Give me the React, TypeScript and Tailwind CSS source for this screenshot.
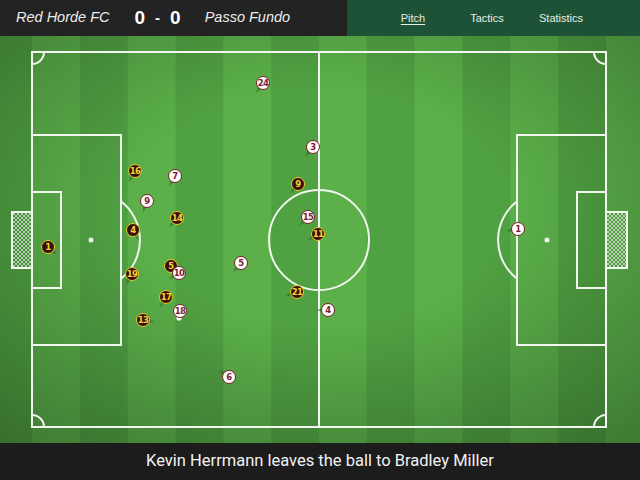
import React from "react";

type Player = { n: number; x: number; y: number; a: number };

// Match view: pitch coordinates are in pixels of the pitch area (top bar excluded)
const TOP = 36;

const HOME: Player[] = [
  { n: 1, x: 48, y: 247, a: 40 },
  { n: 16, x: 135, y: 171, a: 120 },
  { n: 4, x: 133, y: 230, a: 60 },
  { n: 14, x: 177, y: 218, a: 130 },
  { n: 19, x: 132, y: 274, a: 120 },
  { n: 5, x: 171, y: 266, a: 60 },
  { n: 17, x: 166, y: 297, a: 120 },
  { n: 13, x: 143, y: 320, a: 10 },
  { n: 9, x: 298, y: 184, a: 130 },
  { n: 11, x: 318, y: 234, a: 150 },
  { n: 21, x: 297, y: 292, a: 160 },
];

const AWAY: Player[] = [
  { n: 24, x: 263, y: 83, a: 125 },
  { n: 3, x: 313, y: 147, a: 130 },
  { n: 7, x: 175, y: 176, a: 120 },
  { n: 9, x: 147, y: 201, a: 110 },
  { n: 15, x: 308, y: 217, a: 135 },
  { n: 5, x: 241, y: 263, a: 130 },
  { n: 10, x: 179, y: 273, a: 150 },
  { n: 18, x: 180, y: 311, a: 100 },
  { n: 4, x: 328, y: 310, a: 180 },
  { n: 6, x: 229, y: 377, a: 215 },
  { n: 1, x: 518, y: 229, a: 170 },
];

const LINE = "#f1f6ee";

function shadowPoints(p: Player) {
  const r = (p.a * Math.PI) / 180;
  const cx = p.x;
  const cy = p.y - TOP;
  const tx = cx + 12 * Math.cos(r);
  const ty = cy + 12 * Math.sin(r);
  const px = -Math.sin(r) * 4;
  const py = Math.cos(r) * 4;
  return `${cx + px},${cy + py} ${tx},${ty} ${cx - px},${cy - py}`;
}

function PitchDrawing() {
  const stripeW = 574 / 12;
  const stripes = [];
  for (let k = -1; k <= 12; k++) {
    if (k % 2 !== 0) {
      stripes.push(
        <rect key={k} x={32 + stripeW * k} y={0} width={stripeW} height={407} fill="#50a142" />
      );
    }
  }
  const cy = 204;
  return (
    <svg width={640} height={407} className="absolute inset-0" viewBox="0 0 640 407">
      <defs>
        <radialGradient id="vignette" cx="50%" cy="42%" r="75%">
          <stop offset="0.38" stopColor="#000" stopOpacity="0" />
          <stop offset="1" stopColor="#000" stopOpacity="0.3" />
        </radialGradient>
        <pattern id="net" width="4" height="4" patternUnits="userSpaceOnUse">
          <path d="M0 0 L4 4 M4 0 L0 4" stroke="#ffffff" strokeWidth="0.7" opacity="0.85" />
        </pattern>
      </defs>
      <rect width={640} height={407} fill="#5bb04a" />
      {stripes}
      <rect width={640} height={407} fill="url(#vignette)" />

      <g fill="none" stroke={LINE} strokeWidth={2}>
        <rect x={32} y={16} width={574} height={375} />
        <line x1={319} y1={16} x2={319} y2={391} />
        <circle cx={319} cy={cy} r={50} />

        {/* left end */}
        <rect x={32} y={99} width={89} height={210} />
        <rect x={32} y={156} width={29} height={96} />
        <path d={`M121 ${cy - 38.7} A49 49 0 0 1 121 ${cy + 38.7}`} />
        <rect x={12} y={176} width={20} height={56} fill="url(#net)" />

        {/* right end */}
        <rect x={517} y={99} width={89} height={210} />
        <rect x={577} y={156} width={29} height={96} />
        <path d={`M517 ${cy - 38.7} A49 49 0 0 0 517 ${cy + 38.7}`} />
        <rect x={606} y={176} width={21} height={56} fill="url(#net)" />

        {/* corners */}
        <path d="M32 28 A12 12 0 0 0 44 16" />
        <path d="M594 16 A12 12 0 0 0 606 28" />
        <path d="M32 379 A12 12 0 0 1 44 391" />
        <path d="M594 391 A12 12 0 0 1 606 379" />
      </g>
      <circle cx={91} cy={cy} r={2.5} fill={LINE} />
      <circle cx={547} cy={cy} r={2.5} fill={LINE} />

      {[...HOME, ...AWAY].map((p, i) => (
        <polygon key={i} points={shadowPoints(p)} fill="#1f4a18" opacity={0.4} />
      ))}

      {/* ball */}
      <circle cx={179} cy={282} r={2.6} fill="#ffffff" stroke="#bbbbbb" strokeWidth={0.5} />
    </svg>
  );
}

function Marker({ p, home }: { p: Player; home: boolean }) {
  return (
    <div
      className={
        home
          ? "absolute flex h-[14px] w-[14px] items-center justify-center rounded-full border-[1.5px] border-[#e9cf1f] bg-[#3a0e13] text-[8.5px] font-bold leading-none tracking-[-0.6px] text-[#f3d62b] font-['DejaVu_Sans',sans-serif]"
          : "absolute flex h-[14px] w-[14px] items-center justify-center rounded-full border-[1.5px] border-[#7c1b2b] bg-white text-[8.5px] font-bold leading-none tracking-[-0.6px] text-[#7c1b2b] font-['DejaVu_Sans',sans-serif]"
      }
      style={{ left: p.x - 7, top: p.y - TOP - 7 }}
    >
      {p.n}
    </div>
  );
}

export default function App() {
  return (
    <div className="flex h-[480px] w-[640px] flex-col overflow-hidden font-['Liberation_Sans',Arial,sans-serif]">
      <header className="flex h-9 shrink-0">
        <div className="flex w-[347px] items-center bg-[#232323] pl-4 text-[#ececec]">
          <span className="text-[14.5px] italic">Red Horde FC</span>
          <div className="ml-[25px] flex items-center gap-[10px] font-bold text-white">
            <span className="text-[19px]">0</span>
            <span className="text-[15px]">-</span>
            <span className="text-[19px]">0</span>
          </div>
          <span className="ml-[24px] text-[14.5px] italic">Passo Fundo</span>
        </div>
        <nav className="flex flex-1 items-center bg-[#1d5236] pl-[29px] text-[11px] text-[#e6eee8]">
          <span className="flex w-[74px] justify-center underline underline-offset-2">Pitch</span>
          <span className="flex w-[74px] justify-center">Tactics</span>
          <span className="flex w-[74px] justify-center">Statistics</span>
        </nav>
      </header>

      <main className="relative flex-1">
        <PitchDrawing />
        {HOME.map((p) => (
          <Marker key={`h${p.n}`} p={p} home />
        ))}
        {AWAY.map((p) => (
          <Marker key={`a${p.n}`} p={p} home={false} />
        ))}
      </main>

      <footer className="flex h-[37px] shrink-0 items-center justify-center bg-[#1c1c1c] font-['Roboto',sans-serif] text-[16.5px] text-[#f2f2f2]">
        Kevin Herrmann leaves the ball to Bradley Miller
      </footer>
    </div>
  );
}
